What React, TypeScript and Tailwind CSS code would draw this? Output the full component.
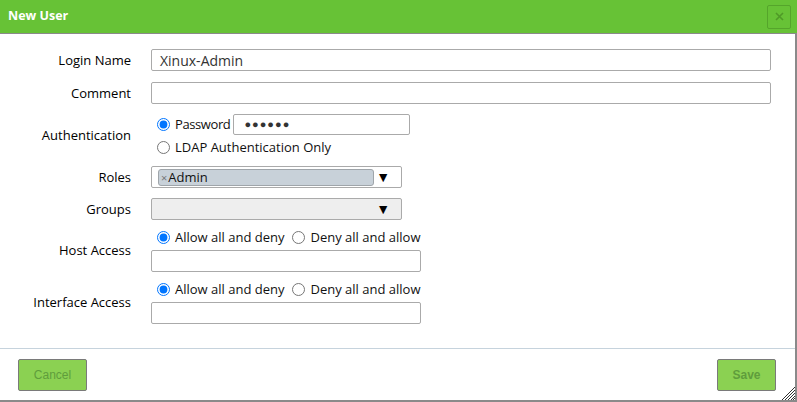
import React from "react";

const font = { fontFamily: '"Open Sans", "Noto Sans", sans-serif' };

function Label({ children }: { children: React.ReactNode }) {
  return <div className="text-right text-[13px] font-medium text-black leading-none">{children}</div>;
}

function Radio({ checked, name, label, tight }: { checked?: boolean; name: string; label: string; tight?: boolean }) {
  return (
    <label className="flex items-center text-[13px] font-medium text-[#111] leading-none">
      <input type="radio" name={name} defaultChecked={checked} className="m-0 ml-[6px] mr-[5px] w-[13px] h-[13px]" />
      <span className={tight ? "tracking-[-0.4px]" : ""}>{label}</span>
    </label>
  );
}

function TextBox({ className = "", value = "" }: { className?: string; value?: string }) {
  return (
    <div className={`h-[22px] border border-[#aaaaaa] rounded-[2px] bg-white flex items-center px-[8px] text-[14px] text-[#333] ${className}`}>
      {value}
    </div>
  );
}

export default function App() {
  return (
    <div className="w-[797px] h-[402px] bg-white flex flex-col overflow-hidden" style={font}>
      {/* title bar */}
      <div className="h-[34px] bg-[#67c236] flex items-center justify-between pl-[8px] pr-[6px] border-b border-[#8a8a8a] shrink-0">
        <span className="text-white font-bold text-[12.5px]">New User</span>
        <div className="w-[24px] h-[24px] border border-[#55a52b] rounded-[2px] flex items-center justify-center">
          <svg width="9" height="9" viewBox="0 0 9 9">
            <path d="M1 1 L8 8 M8 1 L1 8" stroke="#4f9a27" strokeWidth="1.6" />
          </svg>
        </div>
      </div>

      <div className="flex-1 flex flex-col border-r-2 border-b-2 border-[#8a8a8a] relative">
        {/* form */}
        <div className="pt-[15px] pr-[24px] flex flex-col">
          <div className="grid grid-cols-[131px_1fr] gap-x-[20px] items-center">
            <Label>Login Name</Label>
            <TextBox value="Xinux-Admin" />
          </div>
          <div className="grid grid-cols-[131px_1fr] gap-x-[20px] items-center mt-[11px]">
            <Label>Comment</Label>
            <TextBox />
          </div>
          <div className="grid grid-cols-[131px_1fr] gap-x-[20px] items-center mt-[10px]">
            <Label>Authentication</Label>
            <div className="flex flex-col">
              <div className="flex items-center h-[21px]">
                <Radio name="auth" checked label="Password" tight />
                <div className="ml-[3px] w-[177px] h-[21px] border border-[#aaaaaa] rounded-[2px] flex items-center pl-[10px] text-[11px] tracking-[1px] text-[#333]">
                  ●●●●●●
                </div>
              </div>
              <div className="flex items-center h-[21px] pt-[3px]">
                <Radio name="auth" label="LDAP Authentication Only" />
              </div>
            </div>
          </div>
          <div className="grid grid-cols-[131px_1fr] gap-x-[20px] items-center mt-[10px]">
            <Label>Roles</Label>
            <div className="w-[251px] h-[22px] border border-[#aaaaaa] rounded-[2px] bg-white flex items-center pl-[6px] pr-[11px]">
              <div className="w-[216px] h-[17px] bg-[#c8d1d9] border border-[#9fa5aa] rounded-[3px] flex items-center pl-[2px] text-[13px] leading-none">
                <span className="text-[#777] text-[11px] mr-px">×</span>
                <span className="text-[#111]">Admin</span>
              </div>
              <span className="ml-auto text-[14px] text-black leading-none">▼</span>
            </div>
          </div>
          <div className="grid grid-cols-[131px_1fr] gap-x-[20px] items-center mt-[10px]">
            <Label>Groups</Label>
            <div className="w-[251px] h-[22px] border border-[#aaaaaa] rounded-[2px] bg-[#eeeeee] flex items-center pr-[11px]">
              <span className="ml-auto text-[14px] text-black leading-none">▼</span>
            </div>
          </div>
          <div className="grid grid-cols-[131px_1fr] gap-x-[20px] items-center mt-[8px]">
            <Label>Host Access</Label>
            <div className="flex flex-col">
              <div className="flex items-center h-[18px] gap-[2px]">
                <Radio name="host" checked label="Allow all and deny" />
                <Radio name="host" label="Deny all and allow" />
              </div>
              <TextBox className="w-[270px] mt-[4px]" />
            </div>
          </div>
          <div className="grid grid-cols-[131px_1fr] gap-x-[20px] items-center mt-[8px]">
            <Label>Interface Access</Label>
            <div className="flex flex-col">
              <div className="flex items-center h-[18px] gap-[2px]">
                <Radio name="iface" checked label="Allow all and deny" />
                <Radio name="iface" label="Deny all and allow" />
              </div>
              <TextBox className="w-[270px] mt-[4px]" />
            </div>
          </div>
        </div>

        {/* footer */}
        <div className="mt-auto border-t border-[#c6d3dd] h-[52px] flex items-start justify-between pt-[10px] pl-[18px] pr-[19px]">
          <button className="w-[69px] h-[32px] bg-[#8bd152] border border-[#7a7a7a] rounded-[2px] text-[12px] text-[#5f9d3c]" style={{ fontFamily: '"Liberation Sans", Arial, sans-serif' }}>
            Cancel
          </button>
          <button className="w-[59px] h-[32px] bg-[#8bd152] border border-[#7a7a7a] rounded-[2px] text-[12px] font-bold text-[#5f9d3c]" style={{ fontFamily: '"Liberation Sans", Arial, sans-serif' }}>
            Save
          </button>
        </div>

        {/* resize grip */}
        <svg className="absolute right-0 bottom-0" width="16" height="16" viewBox="0 0 16 16">
          <path d="M3 16 L16 3 M6 16 L16 6 M9 16 L16 9 M12 16 L16 12 M14 16 L16 14" stroke="#333" strokeWidth="1" />
        </svg>
      </div>
    </div>
  );
}
